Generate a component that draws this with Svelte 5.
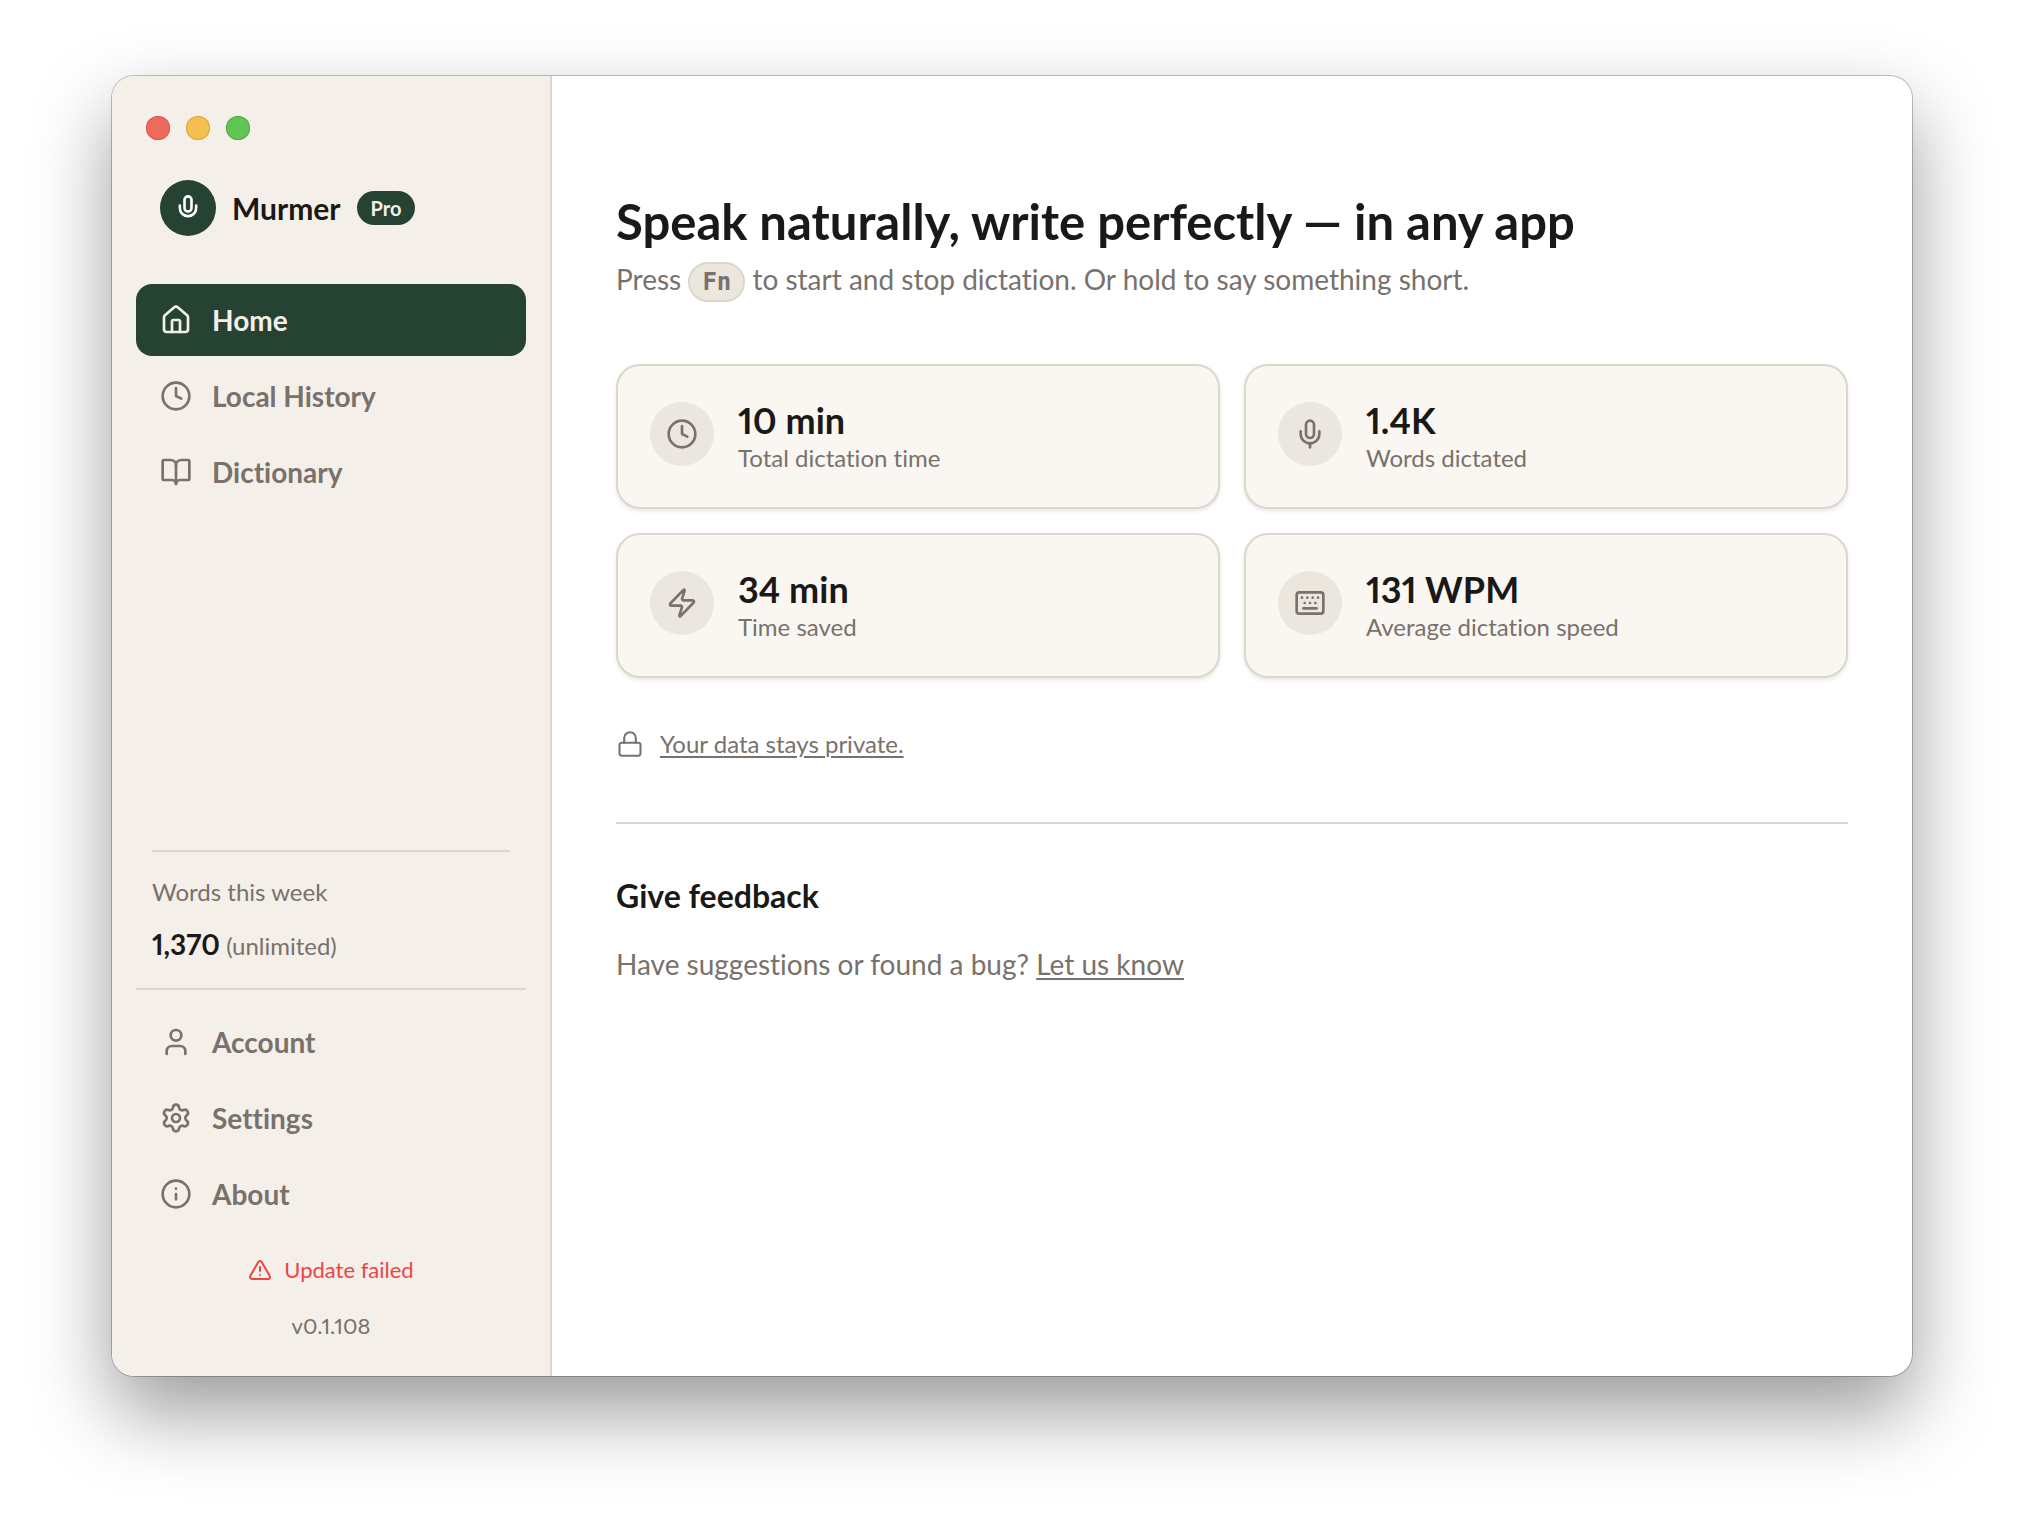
<script>
	const mainNav = [
		{ label: 'Home', icon: 'home' },
		{ label: 'Local History', icon: 'clock' },
		{ label: 'Dictionary', icon: 'book' }
	];

	const footerNav = [
		{ label: 'Account', icon: 'user' },
		{ label: 'Settings', icon: 'settings' },
		{ label: 'About', icon: 'info' }
	];

	const stats = [
		{ value: '10 min', label: 'Total dictation time', icon: 'clock' },
		{ value: '1.4K', label: 'Words dictated', icon: 'mic' },
		{ value: '34 min', label: 'Time saved', icon: 'zap' },
		{ value: '131 WPM', label: 'Average dictation speed', icon: 'keyboard' }
	];

	let active = $state('Home');
</script>

<svelte:head>
	<title>Murmer</title>
</svelte:head>

{#snippet icon(name)}
	<svg class="icon" viewBox="0 0 24 24" aria-hidden="true">
		{#if name === 'home'}
			<path d="M15 21v-8a1 1 0 0 0-1-1h-4a1 1 0 0 0-1 1v8" />
			<path d="M3 10a2 2 0 0 1 .709-1.528l7-5.999a2 2 0 0 1 2.582 0l7 5.999A2 2 0 0 1 21 10v9a2 2 0 0 1-2 2H5a2 2 0 0 1-2-2z" />
		{:else if name === 'clock'}
			<circle cx="12" cy="12" r="10" />
			<path d="M12 6v6l4 2" />
		{:else if name === 'book'}
			<path d="M12 7v14" />
			<path d="M3 18a1 1 0 0 1-1-1V4a1 1 0 0 1 1-1h5a4 4 0 0 1 4 4 4 4 0 0 1 4-4h5a1 1 0 0 1 1 1v13a1 1 0 0 1-1 1h-6a3 3 0 0 0-3 3 3 3 0 0 0-3-3z" />
		{:else if name === 'user'}
			<path d="M19 21v-2a4 4 0 0 0-4-4H9a4 4 0 0 0-4 4v2" />
			<circle cx="12" cy="7" r="4" />
		{:else if name === 'settings'}
			<path d="M9.671 4.136a2.34 2.34 0 0 1 4.659 0 2.34 2.34 0 0 0 3.319 1.915 2.34 2.34 0 0 1 2.33 4.033 2.34 2.34 0 0 0 0 3.831 2.34 2.34 0 0 1-2.33 4.033 2.34 2.34 0 0 0-3.319 1.915 2.34 2.34 0 0 1-4.659 0 2.34 2.34 0 0 0-3.32-1.915 2.34 2.34 0 0 1-2.33-4.033 2.34 2.34 0 0 0 0-3.831A2.34 2.34 0 0 1 6.35 6.051a2.34 2.34 0 0 0 3.319-1.915" />
			<circle cx="12" cy="12" r="3" />
		{:else if name === 'info'}
			<circle cx="12" cy="12" r="10" />
			<path d="M12 16v-4M12 8h.01" />
		{:else if name === 'mic'}
			<path d="M12 19v3" />
			<path d="M19 10v2a7 7 0 0 1-14 0v-2" />
			<rect x="9" y="2" width="6" height="13" rx="3" />
		{:else if name === 'logo'}
			<path d="M19 10v2a7 7 0 0 1-14 0v-2" />
			<rect x="9" y="2" width="6" height="13" rx="3" />
		{:else if name === 'zap'}
			<path d="M4 14a1 1 0 0 1-.78-1.63l9.9-10.2a.5.5 0 0 1 .86.46l-1.92 6.02A1 1 0 0 0 13 10h7a1 1 0 0 1 .78 1.63l-9.9 10.2a.5.5 0 0 1-.86-.46l1.92-6.02A1 1 0 0 0 11 14z" />
		{:else if name === 'keyboard'}
			<path d="M10 8h.01M12 12h.01M14 8h.01M16 12h.01M18 8h.01M6 8h.01M7 16h10M8 12h.01" />
			<rect x="2" y="4" width="20" height="16" rx="2" />
		{:else if name === 'lock'}
			<rect x="3" y="11" width="18" height="11" rx="2" />
			<path d="M7 11V7a5 5 0 0 1 10 0v4" />
		{:else if name === 'alert'}
			<path d="m21.73 18-8-14a2 2 0 0 0-3.48 0l-8 14A2 2 0 0 0 4 21h16a2 2 0 0 0 1.73-3" />
			<path d="M12 9v4M12 17h.01" />
		{/if}
	</svg>
{/snippet}

{#snippet navItem(item)}
	<button class="nav-item" class:active={active === item.label} onclick={() => (active = item.label)}>
		{@render icon(item.icon)}
		<span>{item.label}</span>
	</button>
{/snippet}

<div class="stage">
	<div class="window">
		<aside class="sidebar">
			<div class="traffic">
				<button class="dot close" aria-label="Close"></button>
				<button class="dot minimize" aria-label="Minimize"></button>
				<button class="dot zoom" aria-label="Zoom"></button>
			</div>

			<div class="brand">
				<span class="brand-logo">{@render icon('logo')}</span>
				<span class="brand-name">Murmer</span>
				<span class="brand-badge">Pro</span>
			</div>

			<nav class="nav">
				{#each mainNav as item}
					{@render navItem(item)}
				{/each}
			</nav>

			<div class="usage">
				<div class="usage-label">Words this week</div>
				<div class="usage-value"><strong>1,370</strong> <span>(unlimited)</span></div>
			</div>

			<nav class="nav nav-footer">
				{#each footerNav as item}
					{@render navItem(item)}
				{/each}
			</nav>

			<div class="status">
				<button class="update">
					{@render icon('alert')}
					<span>Update failed</span>
				</button>
				<span class="version">v0.1.108</span>
			</div>
		</aside>

		<main class="content">
			<h1>Speak naturally, write perfectly — in any app</h1>
			<p class="hint">
				Press <kbd>Fn</kbd> to start and stop dictation. Or hold to say something short.
			</p>

			<section class="stats">
				{#each stats as stat}
					<div class="card">
						<span class="card-icon">{@render icon(stat.icon)}</span>
						<div>
							<div class="card-value">{stat.value}</div>
							<div class="card-label">{stat.label}</div>
						</div>
					</div>
				{/each}
			</section>

			<p class="privacy">
				{@render icon('lock')}
				<a href="#privacy">Your data stays private.</a>
			</p>

			<section class="feedback">
				<h2>Give feedback</h2>
				<p>Have suggestions or found a bug? <a href="#feedback">Let us know</a></p>
			</section>
		</main>
	</div>
</div>

<style>
	:global(body) {
		background: #fff;
	}

	.stage {
		--green: #264233;
		--ink: #1a1917;
		--muted: #78716c;
		--line: #dcd7ca;
		box-sizing: border-box;
		display: flex;
		min-height: 100vh;
		padding: 76px 112px 148px;
		font-family: Lato, 'Open Sans', sans-serif;
		font-variant-ligatures: none;
		font-variant-numeric: proportional-nums;
		color: var(--muted);
	}

	h1,
	h2,
	p {
		margin: 0;
	}

	button {
		padding: 0;
		border: 0;
		background: none;
		font: inherit;
		font-variant-ligatures: none;
		color: inherit;
		cursor: pointer;
	}

	a {
		color: inherit;
		text-decoration-thickness: 2px;
		text-underline-offset: 3px;
	}

	.icon {
		flex: none;
		width: 32px;
		height: 32px;
		fill: none;
		stroke: currentColor;
		stroke-width: 2;
		stroke-linecap: round;
		stroke-linejoin: round;
	}

	.window {
		display: flex;
		flex: 1;
		overflow: hidden;
		border-radius: 22px;
		background: #fff;
		box-shadow:
			0 0 0 1px rgba(0, 0, 0, 0.24),
			0 36px 80px rgba(0, 0, 0, 0.4);
	}

	/* Sidebar */
	.sidebar {
		box-sizing: border-box;
		display: flex;
		flex: none;
		flex-direction: column;
		width: 440px;
		padding: 40px 24px 36px;
		border-right: 2px solid var(--line);
		background: #f4efe9;
	}

	.traffic {
		display: flex;
		gap: 16px;
		padding-left: 10px;
	}

	.dot {
		width: 24px;
		height: 24px;
		border-radius: 50%;
	}

	.close {
		background: #ed6a5e;
		box-shadow: inset 0 0 0 1px #d9564b;
	}

	.minimize {
		background: #f5bf4f;
		box-shadow: inset 0 0 0 1px #dba33b;
	}

	.zoom {
		background: #61c554;
		box-shadow: inset 0 0 0 1px #4ead3f;
	}

	.brand {
		display: flex;
		align-items: center;
		margin: 40px 0 48px;
		padding-left: 24px;
	}

	.brand-logo {
		display: flex;
		align-items: center;
		justify-content: center;
		width: 56px;
		height: 56px;
		border-radius: 50%;
		background: var(--green);
		color: #fff;
	}

	.brand-logo .icon {
		width: 28px;
		height: 28px;
		stroke-width: 2.25;
	}

	.brand-name {
		margin: 0 16px;
		font-size: 30px;
		font-weight: 700;
		line-height: 36px;
		color: var(--ink);
	}

	.brand-badge {
		padding: 0 14px;
		border-radius: 17px;
		background: var(--green);
		font-size: 20px;
		font-weight: 700;
		line-height: 34px;
		color: #f4efe9;
	}

	.nav {
		display: flex;
		flex-direction: column;
		gap: 4px;
	}

	.nav-item {
		display: flex;
		align-items: center;
		gap: 20px;
		height: 72px;
		padding: 0 24px;
		border-radius: 16px;
		font-size: 28px;
		font-weight: 700;
		line-height: 36px;
	}

	.nav-item.active {
		background: var(--green);
		color: #f4efe9;
	}

	.usage {
		margin: auto 16px 0;
		padding: 22px 0 24px;
		border-top: 2px solid var(--line);
		font-size: 24px;
		line-height: 36px;
	}

	.usage-value {
		margin-top: 16px;
	}

	.usage strong {
		font-size: 28px;
		color: var(--ink);
	}

	.nav-footer {
		padding-top: 16px;
		border-top: 2px solid var(--line);
	}

	.status {
		display: flex;
		flex-direction: column;
		align-items: center;
		gap: 28px;
		margin-top: 26px;
		font-size: 22px;
		line-height: 28px;
	}

	.update {
		display: flex;
		align-items: center;
		gap: 12px;
		color: #ef4444;
	}

	.update .icon {
		width: 24px;
		height: 24px;
	}

	/* Content */
	.content {
		flex: 1;
		min-width: 0;
		padding: 115px 64px 64px;
	}

	h1 {
		font-size: 49px;
		font-weight: 700;
		line-height: 60px;
		color: var(--ink);
	}

	.hint {
		padding-top: 6px;
		font-size: 28px;
		line-height: 44px;
	}

	kbd {
		display: inline-block;
		box-sizing: border-box;
		height: 40px;
		padding: 0 12px;
		border: 2px solid var(--line);
		border-radius: 20px;
		background: #ebe7df;
		font-family: 'DejaVu Sans Mono', monospace;
		font-size: 24px;
		font-weight: 700;
		line-height: 36px;
	}

	.stats {
		display: grid;
		grid-template-columns: 1fr 1fr;
		gap: 24px;
		margin-top: 62px;
	}

	.card {
		display: flex;
		gap: 24px;
		padding: 36px 32px 33px;
		border: 2px solid var(--line);
		border-radius: 24px;
		background: #faf7f2;
		box-shadow: 0 2px 4px rgba(0, 0, 0, 0.1);
	}

	.card-icon {
		display: flex;
		align-items: center;
		justify-content: center;
		width: 64px;
		height: 64px;
		border-radius: 50%;
		background: #ebe7df;
	}

	.card-value {
		font-size: 36px;
		font-weight: 700;
		line-height: 36px;
		color: var(--ink);
	}

	.card-label {
		margin-top: 4px;
		font-size: 24px;
		line-height: 32px;
	}

	.privacy {
		display: flex;
		align-items: center;
		gap: 16px;
		margin-top: 48px;
		font-size: 24px;
		line-height: 36px;
	}

	.privacy .icon {
		width: 28px;
		height: 28px;
		stroke-width: 1.75;
	}

	.feedback {
		margin-top: 60px;
		padding-top: 50px;
		border-top: 2px solid var(--line);
	}

	h2 {
		font-size: 32px;
		font-weight: 700;
		line-height: 44px;
		color: var(--ink);
	}

	.feedback p {
		margin-top: 24px;
		font-size: 28px;
		line-height: 44px;
	}
</style>
